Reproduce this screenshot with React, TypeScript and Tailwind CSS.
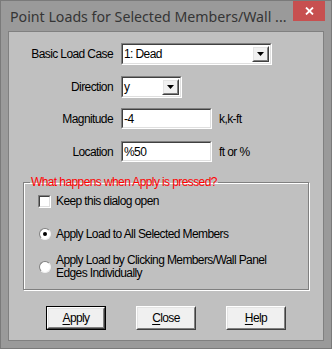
import React from 'react';

const sunkenOuter = 'border border-t-[#808080] border-l-[#808080] border-b-white border-r-white';
const sunkenInner = 'border border-t-[#404040] border-l-[#404040] border-b-[#dfdfdf] border-r-[#dfdfdf]';
const raisedOuter = 'border border-t-white border-l-white border-b-[#404040] border-r-[#404040]';
const raisedInner = 'border border-t-[#e3e3e3] border-l-[#e3e3e3] border-b-[#808080] border-r-[#808080]';

const DropArrow = () => (
  <div className={`${raisedOuter} h-full w-[17px] bg-[#f0f0f0]`}>
    <div className={`${raisedInner} h-full w-full flex items-center justify-center`}>
      <svg width="7" height="4" viewBox="0 0 7 4">
        <polygon points="0,0 7,0 3.5,4" fill="#000" />
      </svg>
    </div>
  </div>
);

const Field = ({ width, value, dropdown }: { width: string; value: string; dropdown?: boolean }) => (
  <div className={`${sunkenOuter} ${width} h-full`}>
    <div className={`${sunkenInner} h-full w-full bg-white flex items-center`}>
      <span className="flex-1 pl-[1px] leading-none">{value}</span>
      {dropdown && (
        <div className="h-full py-[1px] pr-[1px]">
          <DropArrow />
        </div>
      )}
    </div>
  </div>
);

const Row = ({ label, mt, h, children }: { label: string; mt: string; h: string; children: React.ReactNode }) => (
  <div className={`flex items-center ${mt} ${h}`}>
    <div className="w-[104px] text-right">{label}</div>
    <div className="ml-[8px] flex items-center h-full gap-[7px]">{children}</div>
  </div>
);

const Button = ({ first, rest, isDefault }: { first: string; rest: string; isDefault?: boolean }) => (
  <div className={`w-[60px] h-[24px] ${isDefault ? 'border border-black' : ''}`}>
    <div className={`${raisedOuter} h-full w-full bg-[#f0f0f0]`}>
      <div className={`${raisedInner} h-full w-full flex items-center justify-center`}>
        <span>
          <span className="underline underline-offset-2">{first}</span>
          {rest}
        </span>
      </div>
    </div>
  </div>
);

export default function App() {
  return (
    <div className="w-[332px] h-[349px] bg-[#9a9a9a] border border-[#7a7a7a] flex flex-col">
      {/* title bar */}
      <div className="h-[30px] flex items-start relative">
        <div
          className="pl-[9px] pt-[5px] text-[14.2px] text-[#353535] whitespace-nowrap"
          style={{ fontFamily: '"Noto Sans", "Open Sans", sans-serif' }}
        >
          Point Loads for Selected Members/Wall ...
        </div>
        <div className="absolute right-[6px] top-0 w-[32px] h-[20px] bg-[#c75050] flex items-center justify-center">
          <svg width="9" height="8" viewBox="0 0 9 8">
            <path d="M1 0.5 L8 7.5 M8 0.5 L1 7.5" stroke="#fff" strokeWidth="1.8" />
          </svg>
        </div>
      </div>

      {/* client */}
      <div
        className="ml-[7px] w-[316px] h-[310px] bg-[#c0c0c0] border border-[#808080] text-[12px] tracking-[-0.6px] text-black flex flex-col"
        style={{ fontFamily: '"Liberation Sans", Arial, sans-serif' }}
      >
        <Row label="Basic Load Case" mt="mt-[11px]" h="h-[22px]">
          <Field width="w-[151px]" value="1: Dead" dropdown />
        </Row>
        <Row label="Direction" mt="mt-[11px]" h="h-[22px]">
          <Field width="w-[61px]" value="y" dropdown />
        </Row>
        <Row label="Magnitude" mt="mt-[10px]" h="h-[21px]">
          <Field width="w-[91px]" value="-4" />
          <span>k,k-ft</span>
        </Row>
        <Row label="Location" mt="mt-[12px]" h="h-[21px]">
          <Field width="w-[91px]" value="%50" />
          <span>ft or %</span>
        </Row>

        <fieldset className="ml-[14px] mt-[13px] w-[286px] border border-[#808080] shadow-[inset_1px_1px_0_#fff,1px_1px_0_#fff] pb-[9px]">
          <legend className="ml-[6px] px-[1px] text-[#ff0000] leading-[14px]">What happens when Apply is pressed?</legend>
          <div className="pl-[14px] flex flex-col">
            <div className="flex items-center h-[14px] mt-[5px]">
              <div className={`${sunkenOuter} w-[13px] h-[13px]`}>
                <div className={`${sunkenInner} w-full h-full bg-white`} />
              </div>
              <span className="ml-[5px]">Keep this dialog open</span>
            </div>
            <div className="flex items-center h-[14px] mt-[19px]">
              <div className="ml-[1px] w-[12px] h-[12px] rounded-full bg-white border border-t-[#808080] border-l-[#808080] border-b-[#f0f0f0] border-r-[#f0f0f0] flex items-center justify-center">
                <div className="w-[4px] h-[4px] rounded-full bg-black" />
              </div>
              <span className="ml-[5px]">Apply Load to All Selected Members</span>
            </div>
            <div className="flex items-center mt-[13px]">
              <div className="ml-[1px] w-[12px] h-[12px] shrink-0 rounded-full bg-white border border-t-[#808080] border-l-[#808080] border-b-[#f0f0f0] border-r-[#f0f0f0]" />
              <span className="ml-[5px] leading-[13px] whitespace-nowrap">
                Apply Load by Clicking Members/Wall Panel
                <br />
                Edges Individually
              </span>
            </div>
          </div>
        </fieldset>

        <div className="flex ml-[37px] mt-[16px] gap-[30px]">
          <Button first="A" rest="pply" isDefault />
          <Button first="C" rest="lose" />
          <Button first="H" rest="elp" />
        </div>
      </div>
    </div>
  );
}
